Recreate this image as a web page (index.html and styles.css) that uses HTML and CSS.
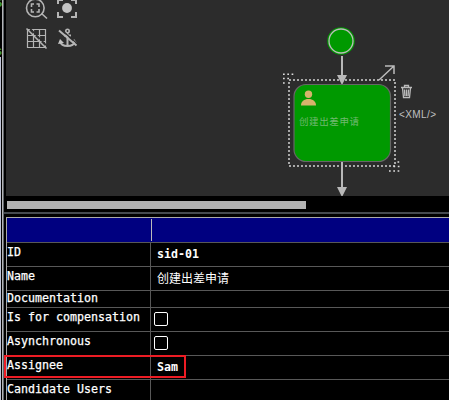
FILE: index.html
```html
<!DOCTYPE html>
<html lang="en">
<head>
<meta charset="utf-8">
<title>Process editor</title>
<link rel="stylesheet" href="styles.css">
</head>
<body>
<div class="app">
  <div class="gutter"><span class="code code-top">S</span><span class="code code-next">s</span></div>
  <main class="main">
    <section class="editor">
      <svg class="canvas" viewBox="6 0 443 196" width="443" height="196">
        <g class="tool">
          <circle class="lens" cx="35.300" cy="8" r="8.800"/>
          <path class="lens" d="M41.500 13.500l5.500 5M31.500 7V4h2.500M36.500 4H39v3M31.500 9v3h2.500M36.500 12H39V9"/>
        </g>
        <g class="tool">
          <path class="thick" d="M58 4V0h5M71 0h5v4M58 12v5h5M71 17h5v-5"/>
          <circle class="solid" cx="67" cy="8" r="4.9"/>
        </g>
        <g class="tool">
          <path d="M27.500 29.500h18v18h-18zM33.500 30v17M39.500 30v17M28 35.500h17M28 41.500h17"/>
          <path class="gap" d="M28.500 27l19 19.500"/>
          <path class="lens" d="M26.500 28.500l20 20"/>
        </g>
        <g class="tool">
          <circle class="lens" cx="67.500" cy="31" r="1.700"/>
          <path class="thick" d="M67.500 33v13M64 35.500h7M60 41.500c1 3.500 4 4.500 7.500 4.500s6.500-1 7.500-4.500"/>
          <path class="solid" d="M58 44l2-5 4 4zM77 43l-3-4-2 4z"/>
          <path class="gap" d="M60.500 29l17 15"/>
          <path class="thick" d="M59 30.500l17.500 15"/>
        </g>
        <circle class="start" cx="341" cy="41" r="13.800"/>
        <circle class="ring" cx="341" cy="41" r="12"/>
        <rect class="selection" x="289" y="80" width="106" height="86"/>
        <rect class="task" x="294" y="84.500" width="96.500" height="77" rx="12"/>
        <path class="flow" d="M342 56v20M342 162v27"/>
        <path class="head" d="M337 75h10l-4.500 9h-1zM337 187h10l-5 10z"/>
        <path class="handle" d="M283 74.200h12M283 78.500h8M283 83h4M397.500 162h4M393.500 166.500h8M389 171h12"/>
        <path class="link" d="M379 80l15-14M385 66h9v8"/>
        <g class="user"><circle cx="308.500" cy="94.200" r="3.700"/><path d="M301 105.500c0-4 3-6.500 7.500-6.500s7.500 2.500 7.500 6.500z"/></g>
        <path class="trash" d="M401 87.500h11M404.500 87v-1.500h4V87M402.500 88l1 9.500h6l1-9.500M404.500 89.500l.4 6.500M406.500 89.500V96M408.500 89.500l-.4 6.500"/>
        <text class="task-label" x="299" y="124.500" textLength="60">创建出差申请</text>
        <text class="xml" x="399" y="118" textLength="37">&lt;XML/&gt;</text>
      </svg>
      <div class="scroll"><div class="thumb"></div></div>
    </section>
    <section class="panel">
      <div class="row header"><div class="name"></div><div class="value"></div></div>
      <div class="row"><div class="name">ID</div><div class="value">sid-01</div></div>
      <div class="row"><div class="name">Name</div><div class="value cjk">创建出差申请</div></div>
      <div class="row short"><div class="name">Documentation</div><div class="value"></div></div>
      <div class="row"><div class="name">Is for compensation</div><div class="value"><span class="check"></span></div></div>
      <div class="row"><div class="name">Asynchronous</div><div class="value"><span class="check"></span></div></div>
      <div class="row"><div class="name">Assignee</div><div class="value">Sam</div><div class="highlight"></div></div>
      <div class="row"><div class="name">Candidate Users</div><div class="value"></div></div>
    </section>
  </main>
</div>
</body>
</html>
```
FILE: styles.css
```css
* { box-sizing: border-box; }
body { margin: 0; background: #000; overflow: hidden; }
.app { display: flex; width: 449px; height: 400px; overflow: hidden; }
.gutter { position: relative; width: 4px; flex: none; overflow: hidden; background: linear-gradient(90deg, transparent 2px, #b4b4b8 2px, #b4b4b8 3px, #60656a 3px), linear-gradient(90deg, #c0c4d8 1px, #000 1px) 0 57px no-repeat; }
.code { position: absolute; left: -5px; font: bold 12px/12px "Liberation Mono", monospace; color: #3c983c; width: 7px; overflow: hidden; }
.code-top { top: -2px; }
.code-next { top: 46px; }
.main { width: 445px; flex: none; }
.editor { height: 214px; padding-left: 2px; border-bottom: 2px solid #454a50; }
.canvas { display: block; background: #2c2c2c; }
.scroll { padding: 5px 0 0 1px; }
.thumb { width: 299px; height: 8px; background: #b3b3b3; }
.tool { fill: none; stroke: #b5b5b5; stroke-width: 1.2; }
.lens { stroke-width: 1.6; }
.thick { stroke-width: 2; }
.tool .solid { fill: #c4c4c4; stroke: none; }
.tool .gap { stroke: #2c2c2c; stroke-width: 1.5; }
.start { fill: #009900; }
.ring { fill: none; stroke: #bbb; stroke-width: 1.3; }
.selection { fill: none; stroke: #a8a8a8; stroke-width: 2; stroke-dasharray: 2 2; }
.task { fill: #009900; stroke: #666; stroke-width: 1.2; }
.flow { stroke: #b8b8b8; stroke-width: 2; }
.head { fill: #b8b8b8; }
.handle { stroke: #ddd; stroke-width: 1.6; stroke-dasharray: 1.7 2.600; }
.link { fill: none; stroke: #bbb; stroke-width: 1.5; }
.user { fill: #d6b36c; }
.trash { fill: none; stroke: #bbb; stroke-width: 1.3; }
.task-label { font: 9.500px "Noto Sans CJK SC", sans-serif; fill: #70b870; }
.xml { font: 10px "Liberation Sans", sans-serif; fill: #c0c0c0; }
.panel { margin: 3px 0 0 2px; border-top: 1px solid #aaa; border-left: 1px solid #aaa; font: bold 11.630px/14px "DejaVu Sans Mono", monospace; color: #fff; }
.row { position: relative; display: flex; height: 24px; border-bottom: 1px solid #585858; }
.short { height: 17px; }
.name { width: 144px; flex: none; padding-top: 2px; border-right: 1px solid #585858; font-weight: normal; -webkit-text-stroke: .25px #fff; white-space: pre; }
.short .name { padding-top: 0; }
.value { flex: 1; padding: 4px 0 0 6px; }
.header { height: 25px; background: #000080; padding: 1px 0; }
.header .name { width: 145px; border-color: #bbb; }
.cjk { font: 12px/14px "Noto Sans CJK SC", sans-serif; }
.check { display: block; width: 14px; height: 14px; margin-left: -3px; border: 1px solid #fff; border-radius: 2px; }
.highlight { position: absolute; left: -3px; top: -1px; width: 182px; height: 23px; border: 2px solid #ed1c24; }
```
